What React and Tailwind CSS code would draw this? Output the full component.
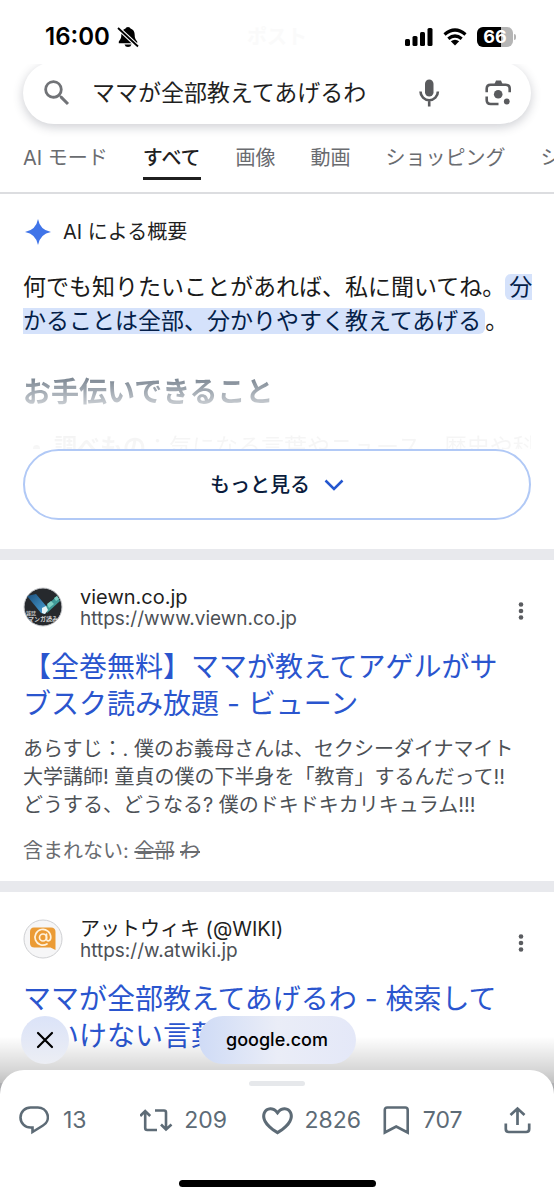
const tabs = ['AI モード', 'すべて', '画像', '動画', 'ショッピング', 'ショート動画'];

const results = [
  {
    site: 'viewn.co.jp',
    url: 'https://www.viewn.co.jp',
    icon: ViewnIcon,
    title: ['【全巻無料】ママが教えてアゲルがサ', 'ブスク読み放題 - ビューン'],
    text: [
      'あらすじ：. 僕のお義母さんは、セクシーダイナマイト',
      '大学講師! 童貞の僕の下半身を「教育」するんだって!!',
      'どうする、どうなる? 僕のドキドキカリキュラム!!!',
    ],
    missing: ['全部', 'わ'],
  },
  {
    site: 'アットウィキ (@WIKI)',
    url: 'https://w.atwiki.jp',
    icon: AtwikiIcon,
    title: ['ママが全部教えてあげるわ - 検索して', 'はいけない言葉'],
    text: [],
  },
];

function ViewnIcon() {
  return (
    <svg viewBox="0 0 40 40" className="size-10 shrink-0" aria-hidden="true">
      <defs>
        <linearGradient id="tick" x1="0" y1="0" x2="1" y2="1">
          <stop offset="0" stopColor="#1c4f7c" />
          <stop offset="1" stopColor="#4aa3d8" />
        </linearGradient>
        <clipPath id="disc">
          <circle cx="20" cy="20" r="19" />
        </clipPath>
      </defs>
      <circle cx="20" cy="20" r="19" fill="#26292d" stroke="#c9cbce" />
      <g clipPath="url(#disc)">
        <path d="M4 9 L13 7 L24 20 L22 27 L18 26Z" fill="url(#tick)" />
        <path d="M21 21 L34 9 L37 14 L24 26Z" fill="#3f9a98" />
        <path d="M24 17l4-3 3 3-5 4zM31 11l3-2 2 3-3 2z" fill="#7fd0c4" />
        <path d="M19 21l4-2 2 4-3 4-3-1z" fill="#e8f4f6" />
        <text x="3" y="28" fontSize="5" fontWeight="700" fill="#bdbdbd">雑誌</text>
        <text x="5" y="34" fontSize="6" fontWeight="700" fill="#d0d0d0">マンガ読み放題</text>
      </g>
    </svg>
  );
}

function AtwikiIcon() {
  return (
    <svg viewBox="0 0 40 40" className="size-10 shrink-0" aria-hidden="true">
      <circle cx="20" cy="20" r="19" fill="#f6f6f7" stroke="#cfd0d3" />
      <path d="M11 8.500H28q4.500 0 4.500 4.500V31l-5-2.500H11.500q-4.500 0-4.500-4.500V13q0-4.500 4-4.500z" fill="#eb9b35" />
      <g fill="none" stroke="#fff2dc" strokeWidth="1.700" strokeLinecap="round">
        <circle cx="20" cy="18.500" r="3.500" />
        <path d="M23.500 15v5q.3 2.300 2.300 1.800 2-.8 2-3.800a7.900 7.900 0 1 0-3.800 7" />
      </g>
    </svg>
  );
}

function StatusBar() {
  return (
    <div className="relative z-10 flex h-16 items-center justify-between bg-white pt-2.5 pr-[38px] pl-[45px] text-black">
      <span className="absolute inset-x-0 text-center text-xl font-bold text-[#fafafa]">ポスト</span>
      <div className="relative flex items-center gap-[7px]">
        <span className="text-2xl leading-8 font-semibold">16:00</span>
        <svg viewBox="0 0 22 22" className="size-[22px]" aria-label="消音">
          <path d="M11 1q2.200 0 2.500 1.600 4.200 1.500 4.200 6.400c0 3.800 1.400 5 2.500 6.400v1.900H1.800v-1.900C2.900 14 4.300 12.800 4.300 9q0-4.900 4.200-6.400.3-1.600 2.500-1.600z" />
          <path d="M7.500 18.500h7q-.7 2.500-3.500 2.500t-3.500-2.500z" />
          <path d="M0 1 L22 21.500" stroke="#fff" strokeWidth="4.200" />
          <path d="M1 2 L21 20.500" stroke="#000" strokeWidth="1.800" />
        </svg>
      </div>
      <div className="relative flex items-center gap-2.5">
        <svg viewBox="0 0 29 20" className="h-5 w-[29px]" aria-label="電波">
          <rect x="1" y="12" width="5" height="7" rx="1.500" />
          <rect x="8.500" y="9" width="5" height="10" rx="1.500" />
          <rect x="16" y="5" width="5" height="14" rx="1.500" />
          <rect x="23.500" y="1" width="5" height="18" rx="1.500" />
        </svg>
        <svg viewBox="0 0 24 18" className="h-[18px] w-6" aria-label="Wi-Fi">
          <g fill="none" stroke="#000" strokeWidth="3.200">
            <path d="M1.500 6.500 Q12 -2.500 22.500 6.500" />
            <path d="M5.300 10.800 Q12 5.200 18.700 10.800" />
          </g>
          <path d="M12 17.500 L7.800 13.300 Q12 10 16.200 13.300Z" />
        </svg>
        <div className="flex items-center gap-px">
          <div className="flex h-5 w-9 items-center justify-center rounded-md bg-linear-to-r from-black from-67% to-[#b5b5b5] to-67% text-lg leading-5 font-bold text-white">
            66
          </div>
          <div className="h-1.5 w-0.5 rounded-r bg-[#b5b5b5]" />
        </div>
      </div>
    </div>
  );
}

function SearchBox() {
  return (
    <form className="mx-[23px] -mt-0.5 flex h-[62px] items-center rounded-full bg-white pr-[19px] pl-[17px] text-[#5a5b5e] shadow-[0_3px_10px_1px_rgba(60,64,80,0.22)]">
      <svg viewBox="0 0 24 24" className="size-[34px] shrink-0" fill="#717377" aria-hidden="true">
        <path d="M15.500 14h-.79l-.28-.27A6.471 6.471 0 0 0 16 9.500 6.500 6.500 0 1 0 9.500 16c1.610 0 3.090-.59 4.230-1.570l.27.28v.79l5 4.990L20.490 19l-4.990-5zm-6 0C7.010 14 5 11.990 5 9.500S7.010 5 9.500 5 14 7.010 14 9.500 11.990 14 9.500 14z" />
      </svg>
      <input
        aria-label="検索"
        defaultValue="ママが全部教えてあげるわ"
        className="ml-[18px] h-10 min-w-0 flex-1 bg-transparent pb-1 text-[23px] text-[#1f1f1f] outline-none"
      />
      <button type="button" aria-label="音声検索" className="mr-[38px]">
        <svg viewBox="0 0 34 34" className="size-[34px]">
          <rect x="13" y="3.500" width="8.500" height="17" rx="4.250" fill="currentColor" />
          <path d="M8.500 15.500a8.700 8.700 0 0 0 17.400 0M17.200 24.500V30.500" fill="none" stroke="currentColor" strokeWidth="2.600" />
        </svg>
      </button>
      <button type="button" aria-label="画像で検索">
        <svg viewBox="0 0 28 28" className="size-7" fill="currentColor">
          <path
            d="M2.700 13.200V9.700q0-4 4-4H21.700q4 0 4 4V13.200M2.700 17.500V21q0 4 4 4H14.500"
            fill="none"
            stroke="currentColor"
            strokeWidth="2.600"
          />
          <path d="M12 1.500h5l1.500 3.500h-8z" />
          <circle cx="14.200" cy="15.300" r="4.300" />
          <circle cx="22.800" cy="22.500" r="2.900" />
        </svg>
      </button>
    </form>
  );
}

function Tabs() {
  return (
    <nav className="flex gap-[35px] overflow-hidden border-b-2 border-[#dcdde0] px-[23px] pt-4 pb-3 text-xl leading-[36px] whitespace-nowrap">
      {tabs.map((t) => (
        <a
          key={t}
          href="#"
          className={
            t === 'すべて'
              ? 'shrink-0 border-b-[3px] border-[#1f1f1f] pb-px font-medium text-[#1f1f1f]'
              : 'shrink-0 border-b-[3px] border-transparent pb-px text-[#6a6c70]'
          }
        >
          {t}
        </a>
      ))}
    </nav>
  );
}

function Overview() {
  return (
    <section className="border-b-[11px] border-[#e8e9ed] px-[23px] pt-6 pb-[29px]">
      <div className="flex items-center gap-3">
        <svg viewBox="0 0 28 28" className="size-7" aria-hidden="true">
          <path d="M15 1 Q17 12 28 14 Q17 16 15 27 Q13 16 2 14 Q13 12 15 1Z" fill="#4074e8" />
        </svg>
        <h2 className="text-xl leading-7 text-[#1f1f1f]">AI による概要</h2>
      </div>
      <p className="-mr-1 mt-6 text-[23px] leading-[34px] text-[#1a1a1a]">
        何でも知りたいことがあれば、私に聞いてね。
        <mark className="rounded-md bg-[#d5e2fb] px-1 font-['Liberation_Sans','Noto_Sans_CJK_JP',sans-serif] text-[#041e49]">
          分かることは全部、分かりやすく教えてあげる
        </mark>
        。
      </p>
      <div className="h-[111px] overflow-hidden mask-[linear-gradient(to_bottom,#000_0,rgba(0,0,0,0.6)_36%,rgba(0,0,0,0.25)_60%,rgba(0,0,0,0.05)_78%,rgba(0,0,0,0.03))]">
        <h3 className="pt-[34px] text-[28px] leading-10 font-bold text-[#26384b]">お手伝いできること</h3>
        <ul className="mt-[18px] list-disc pl-[31px] text-[23px] leading-[34px] whitespace-nowrap">
          <li>
            <b>調べもの</b>：気になる言葉やニュース、歴史や科
          </li>
        </ul>
      </div>
      <button
        type="button"
        className="flex h-[71px] w-full items-center justify-center gap-3.5 rounded-full border-2 border-[#b1c9f6] text-xl font-medium text-[#0a1c3d]"
      >
        もっと見る
        <svg viewBox="0 0 20 12" className="h-3 w-5" aria-hidden="true">
          <path d="M1.500 1.500 L10 10 L18.500 1.500" fill="none" stroke="#2457cf" strokeWidth="2.500" />
        </svg>
      </button>
    </section>
  );
}

function Result({ item }) {
  const Icon = item.icon;
  return (
    <article className="border-b-[11px] border-[#e8e9ed] px-[23px] pt-[25px] pb-4">
      <div className="flex items-center">
        <Icon />
        <div className="ml-[17px] flex-1">
          <div className="text-xl leading-6 text-[#1f1f1f]">{item.site}</div>
          <div className="text-[19px] leading-5 text-[#4d5156]">{item.url}</div>
        </div>
        <button type="button" aria-label="詳細" className="mt-2">
          <svg viewBox="0 0 20 20" className="size-5" fill="#5a5c60">
            <circle cx="10" cy="3.500" r="2.300" />
            <circle cx="10" cy="10" r="2.300" />
            <circle cx="10" cy="16.500" r="2.300" />
          </svg>
        </button>
      </div>
      <h3 className="mt-5 text-[28px] leading-[37px] whitespace-nowrap text-[#2a55ce]">
        <a href="#">
          {item.title.map((line) => (
            <span key={line} className="block">{line}</span>
          ))}
        </a>
      </h3>
      <p className="mt-3 text-xl leading-7 whitespace-nowrap text-[#4d5156]">
        {item.text.map((line) => (
          <span key={line} className="block">{line}</span>
        ))}
      </p>
      {item.missing ? (
        <p className="mt-[18px] text-xl leading-7 text-[#6a6c70]">
          含まれない: <s>{item.missing[0]}</s> <s>{item.missing[1]}</s>
        </p>
      ) : null}
    </article>
  );
}

function BrowserPill() {
  return (
    <div className="absolute inset-x-0 bottom-0 flex h-20 items-start justify-center bg-linear-to-b from-transparent from-28% via-black/16 via-70% to-black/32 pt-0.5">
      <button
        type="button"
        aria-label="閉じる"
        className="absolute left-[21px] flex size-12 items-center justify-center rounded-full bg-linear-to-b from-[#dbe3f8] to-[#eceef4] text-black"
      >
        <svg viewBox="0 0 18 18" className="size-[18px]">
          <path d="M2 2 L16 16 M16 2 L2 16" stroke="currentColor" strokeWidth="2.200" strokeLinecap="round" />
        </svg>
      </button>
      <div className="flex h-12 w-[157px] items-center justify-center rounded-full bg-linear-to-r from-[#cfdbf6] via-[#eaedf7] to-[#e4e8f8] text-lg font-medium text-black">
        google.com
      </div>
    </div>
  );
}

function ActionSheet() {
  return (
    <footer className="relative -mt-6 rounded-t-3xl bg-white pt-[11px] pb-3">
      <div className="mx-auto h-[5px] w-14 rounded-full bg-[#e6e8eb]" />
      <div className="mt-[17px] grid h-[34px] grid-cols-[1fr_1fr_1fr_1fr_auto] items-center pr-[23px] pl-[19px] text-[23px] text-[#5d6b76]">
        <button type="button" className="flex items-center gap-3.5" aria-label="返信 13">
          <svg viewBox="0 0 30 30" className="size-[30px]" fill="none" stroke="currentColor" strokeWidth="2.600">
            <path d="M11.500 2.500H18.500a10 9.700 0 0 1 5.500 18L13.500 27V22.500H11.500a10 10 0 0 1 0-20z" />
          </svg>
          13
        </button>
        <button type="button" className="flex items-center gap-2.5" aria-label="リポスト 209">
          <svg viewBox="1 0 34 24" className="h-6 w-[34px]" fill="none" stroke="currentColor" strokeWidth="2.600">
            <path d="M1.200 8 L6.200 3 L11.200 8 M6.200 3.500V20q0 2 2 2H18" />
            <path d="M16 2.500H25q2 0 2 2V21.500M22 16.500 L27 21.500 L32.500 16.500" />
          </svg>
          209
        </button>
        <button type="button" className="flex items-center gap-3" aria-label="いいね 2826">
          <svg viewBox="1.900 2 20.200 20.200" className="size-[31px]" fill="currentColor">
            <path d="M16.697 5.500c-1.222-.06-2.679.51-3.890 2.160l-.805 1.090-.806-1.090C9.984 6.010 8.526 5.440 7.304 5.500c-1.243.07-2.349.78-2.910 1.910-.552 1.120-.633 2.780.479 4.820 1.074 1.970 3.257 4.270 7.129 6.610 3.870-2.340 6.052-4.640 7.126-6.610 1.111-2.040 1.030-3.700.477-4.820-.561-1.130-1.666-1.840-2.908-1.910zm4.187 7.690c-1.351 2.480-4.001 5.120-8.379 7.670l-.503.3-.504-.3c-4.379-2.550-7.029-5.190-8.382-7.670-1.360-2.500-1.410-4.860-.514-6.670.887-1.790 2.647-2.910 4.601-3.010 1.651-.09 3.368.56 4.798 2.010 1.429-1.450 3.146-2.100 4.796-2.010 1.954.1 3.714 1.220 4.601 3.010.896 1.810.846 4.170-.514 6.670z" />
          </svg>
          2826
        </button>
        <button type="button" className="flex items-center gap-3.5" aria-label="ブックマーク 707">
          <svg viewBox="0 0 26 30" className="h-[30px] w-[26px]" fill="none" stroke="currentColor" strokeWidth="2.600">
            <path d="M1.800 27.500V5q0-2.500 2.500-2.500H22.200q2.500 0 2.500 2.500V27.500L13.200 21.500z" />
          </svg>
          707
        </button>
        <button type="button" aria-label="共有">
          <svg viewBox="0 0 27 28" className="h-7 w-[27px]" fill="none" stroke="currentColor" strokeWidth="2.700">
            <path d="M6.500 9 L13.500 2.500 L20.500 9 M13.500 3.500V19 M1.800 17.500V23q0 3 3 3H22.200q3 0 3-3V17.500" />
          </svg>
        </button>
      </div>
      <div className="mx-auto mt-[43px] h-[7px] w-[197px] rounded-full bg-black" />
    </footer>
  );
}

export default function App() {
  return (
    <div lang="ja" className="flex h-screen flex-col overflow-hidden bg-white font-['Inter','Noto_Sans_CJK_JP',sans-serif]">
      <main className="relative min-h-0 flex-1 overflow-hidden">
        <StatusBar />
        <SearchBox />
        <Tabs />
        <Overview />
        {results.map((r) => (
          <Result key={r.url} item={r} />
        ))}
        <BrowserPill />
      </main>
      <ActionSheet />
    </div>
  );
}
